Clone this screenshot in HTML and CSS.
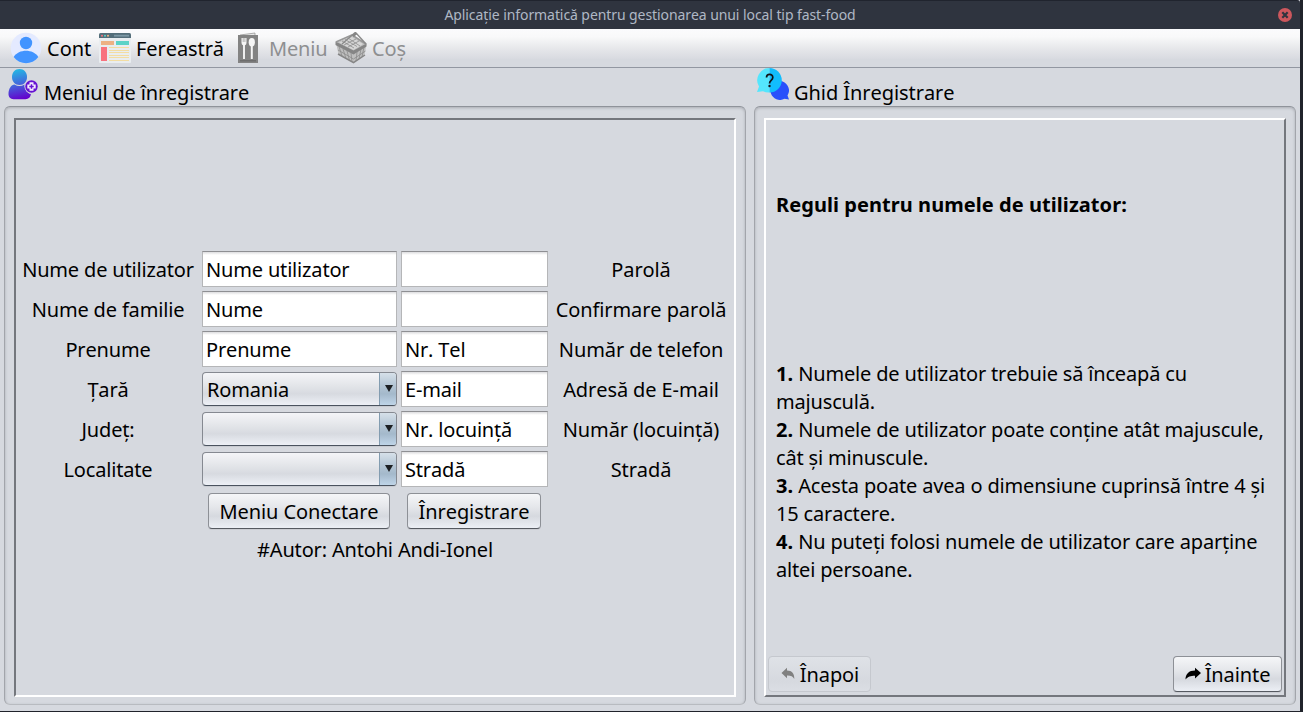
FILE: index.html
```html
<!DOCTYPE html>
<html lang="ro">
<head>
<meta charset="utf-8">
<title>Aplicație informatică pentru gestionarea unui local tip fast-food</title>
<link rel="stylesheet" href="styles.css">
</head>
<body>
<div class="window">
  <header class="titlebar">
    <span class="titlebar-text">Aplicație informatică pentru gestionarea unui local tip fast-food</span>
    <svg class="close" width="14" height="14" viewBox="0 0 14 14"><circle cx="7" cy="7" r="7" fill="#cc575d"/><path d="M4.300 4.300l5.400 5.400M9.700 4.300l-5.400 5.400" stroke="#2f343f" stroke-width="2.200"/></svg>
  </header>
  <nav class="menubar">
    <div class="menu menu-account">
      <svg width="32" height="32" viewBox="0 0 32 32"><circle cx="16" cy="16" r="15.300" fill="#e4eaff"/><circle cx="16" cy="11" r="6.200" fill="#4294ff"/><path d="M3.600 25C9 16.800 23 16.800 28.400 25C22 33.300 10 33.300 3.600 25Z" fill="#4294ff"/></svg>
      <span>Cont</span>
    </div>
    <div class="menu menu-window">
      <svg width="32" height="32" viewBox="0 0 32 32"><path d="M0 6h32v24q0 1-1 1H1q-1 0-1-1z" fill="#e9edf0"/><path d="M0 6V2.500Q0 1 1.500 1h29Q32 1 32 2.500V6z" fill="#546e7a"/><path d="M15 3.700h15" stroke="#7c98a5" stroke-width="1.800"/><circle cx="3" cy="3.700" r="1" fill="#f8727f"/><circle cx="6" cy="3.700" r="1" fill="#5bd3c7"/><circle cx="9" cy="3.700" r="1" fill="#f2b488"/><path d="M2 9h13v4H2z" fill="#edb184"/><path d="M17 9h13v4H17z" fill="#5bd3c7"/><path d="M2 15h6v14H2z" fill="#f8727f"/><path d="M10 15.500h20M10 18.500h20M10 20.500h20M10 23.500h20M10 25.500h20M10 28.500h20" stroke="#f3dda2"/></svg>
      <span>Fereastră</span>
    </div>
    <div class="menu menu-food disabled">
      <svg width="32" height="32" viewBox="0 0 32 32"><path d="M8 3l15-2v4" fill="#e8e8e8" stroke="#8c8c8c" stroke-width=".7"/><path d="M6 3h20v28H6z" fill="#838383"/><path d="M8 28h16v1.500H8z" fill="#6d6d6d"/><path d="M9.500 6h5v5q0 1.800-1.800 2.500h-1.400Q9.500 12.800 9.500 11z" fill="#f5f5f5"/><path d="M11.200 6v4M12.900 6v4" stroke="#838383" stroke-width=".6"/><path d="M12 13v14" stroke="#f5f5f5" stroke-width="1.900"/><ellipse cx="19.800" cy="10.200" rx="3.100" ry="4.200" fill="#f5f5f5"/><path d="M19.800 12v15" stroke="#f5f5f5" stroke-width="2"/></svg>
      <span>Meniu</span>
    </div>
    <div class="menu menu-cart disabled">
      <svg width="32" height="32" viewBox="0 0 32 32"><path d="M1 11l2.500 11L18.500 31L29.500 23L31.500 12L17 4z" fill="#bebebe"/><path d="M4 10.500L17 5l11 7l-9.500 6z" fill="#d6d6d6"/><g fill="none" stroke="#8b8b8b" stroke-width=".8"><path d="M7 9l12 7M10 7.500l12 7M13 6l12 8M9 13l12-6M13 15l11-6M3 18l15.500 9l12-8M4 14.500l3 9.500M8 17l3 9.500M12 19l2.500 9.500M16 21l1 9M22 20l-1 9M26 17l-2 10M29 15l-2 10"/></g><path d="M.500 9.500L18.500 18.500L31.500 11.500v3L18.500 22.500L.500 13z" fill="#858585"/><path d="M1 10L17 3l14 9" fill="none" stroke="#989898" stroke-width="1.800"/><path d="M3 22l15.500 8.700L30 23" fill="none" stroke="#858585" stroke-width="1.500"/><path d="M7 12L19 1.500q1.500-1.500 2.500 0L31 12" fill="none" stroke="#8a8a8a" stroke-width="1.300"/><path d="M17 3l3.500-3l1.800 2l-3.500 3z" fill="#858585"/></svg>
      <span>Coș</span>
    </div>
  </nav>
  <main class="content">
    <section class="group">
      <h1 class="group-title">
        <svg width="32" height="32" viewBox="0 0 32 32"><defs><linearGradient id="person" x1="8" y1="0" x2="15" y2="31" gradientUnits="userSpaceOnUse"><stop offset="0" stop-color="#20c0e4"/><stop offset=".5" stop-color="#4268dc"/><stop offset="1" stop-color="#6500cc"/></linearGradient></defs><g fill="url(#person)"><path d="M11.500 1C16 1 19 4.500 19 9s-3 8-7.500 8S4 13.500 4 9s3-8 7.500-8z"/><path d="M.500 26c0-5.500 3-9.500 6-9.500q5 3 10 0c0 5 3 9 6.300 9.500c0 3-2.300 5.200-5.300 5.200h-12c-3 0-5-2.200-5-5.200z"/></g><circle cx="23.500" cy="18.500" r="7" fill="#d6d9df"/><circle cx="23.500" cy="18.500" r="6.200" fill="#6611d2"/><path d="M23.500 14.300v8.400M19.300 18.500h8.400" stroke="#f5edff" stroke-width="4"/><path d="M23.500 16.300v4.400M21.300 18.500h4.400" stroke="#6611d2" stroke-width="1.500"/></svg>
        <span>Meniul de înregistrare</span>
      </h1>
      <div class="frame"><div class="panel sunken">
        <form class="fields">
          <label>Nume de utilizator</label><div class="field">Nume utilizator</div><div class="field"></div><label>Parolă</label>
          <label>Nume de familie</label><div class="field">Nume</div><div class="field"></div><label>Confirmare parolă</label>
          <label>Prenume</label><div class="field">Prenume</div><div class="field">Nr. Tel</div><label>Număr de telefon</label>
          <label>Țară</label><div class="combo"><span>Romania</span><i class="arrow"></i></div><div class="field">E-mail</div><label>Adresă de E-mail</label>
          <label>Județ:</label><div class="combo"><span></span><i class="arrow"></i></div><div class="field">Nr. locuință</div><label>Număr (locuință)</label>
          <label>Localitate</label><div class="combo"><span></span><i class="arrow"></i></div><div class="field">Stradă</div><label>Stradă</label>
        </form>
        <div class="actions">
          <button class="button login" type="button">Meniu Conectare</button>
          <button class="button register" type="button">Înregistrare</button>
        </div>
        <p class="author">#Autor: Antohi Andi-Ionel</p>
      </div></div>
    </section>
    <section class="group">
      <h1 class="group-title">
        <svg width="32" height="32" viewBox="0 0 32 32"><path d="M22 13a9.500 9.500 0 0 1 8.500 14.500L32 31.500l-4.500-.7A9.500 9.500 0 1 1 22 13z" fill="#2950fb"/><path d="M12.500 0A12.200 12.200 0 0 0 2 18.500L0 24l6-.8A12.200 12.200 0 0 0 12.500 24.500z" fill="#54e6fd"/><path d="M12.500 0a12.250 12.250 0 0 1 0 24.500z" fill="#12bdfd"/><path d="M9.500 9.500c0-4.300 6.300-4.300 6.300 0c0 3-3.300 2.800-3.300 6" fill="none" stroke="#121316" stroke-width="1.700"/><circle cx="12.500" cy="18" r="1.200" fill="#121316"/></svg>
        <span>Ghid Înregistrare</span>
      </h1>
      <div class="frame"><div class="panel raised">
        <h2 class="rules-title">Reguli pentru numele de utilizator:</h2>
        <div class="rules">
          <p><b>1.</b> Numele de utilizator trebuie să înceapă cu<br>majusculă.</p>
          <p><b>2.</b> Numele de utilizator poate conține atât majuscule,<br>cât și minuscule.</p>
          <p><b>3.</b> Acesta poate avea o dimensiune cuprinsă între 4 și<br>15 caractere.</p>
          <p><b>4.</b> Nu puteți folosi numele de utilizator care aparține<br>altei persoane.</p>
        </div>
        <div class="pager">
          <button class="button back" type="button"><svg width="16" height="16" viewBox="0 0 16 16"><path d="M1.500 7L7 1.700v2.900c5 0 7.500 3.500 7.300 8.400c-1.300-2.700-3.500-3.700-7.300-3.600v2.900z" fill="#808080"/></svg>Înapoi</button>
          <button class="button next" type="button"><svg width="16" height="16" viewBox="0 0 16 16"><path d="M16 7L10 1.700v2.700C4 4.400.500 7.700.500 13.500C3 10.500 5.500 9.700 10 9.700v2.900z" fill="#000"/></svg>Înainte</button>
        </div>
      </div></div>
    </section>
  </main>
</div>
</body>
</html>
```

FILE: styles.css
```css
* { box-sizing: border-box; }
body {
  margin: 0;
  height: 712px;
  overflow: hidden;
  background: #20232b;
  color: #000;
  font: 20px/28px "Noto Sans", sans-serif;
  font-kerning: none;
  letter-spacing: -.17px;
}
h1, h2, p { margin: 0; font-size: 20px; }
b { letter-spacing: .06px; }
svg { flex: none; display: block; }
.window {
  width: 1300px;
  height: 711px;
  display: flex;
  flex-direction: column;
  background: #d6d9df;
}
.titlebar {
  height: 29px;
  flex: none;
  display: grid;
  grid-template-columns: 1fr auto 1fr;
  align-items: center;
  padding-right: 8px;
  padding-left: 8px;
  background: #2f343f;
  border-top: 1px solid #20242e;
  border-radius: 0 3px 0 0;
}
.titlebar-text {
  grid-column: 2;
  font-size: 14px;
  line-height: 26px;
  letter-spacing: -.08px;
  color: #afb8c5;
  white-space: nowrap;
}
.close { justify-self: end; }
.menubar {
  height: 39px;
  flex: none;
  display: flex;
  padding: 3px 0 0 10px;
  background: linear-gradient(#fbfbfd 0, #f9f9fa 20%, #e7e8eb 50%, #d9dbe1 77%, #d6d9df 80%);
  border-bottom: 1px solid #9297a1;
}
.menu { display: flex; align-items: center; height: 32px; white-space: nowrap; gap: 5px; }
.menu span { padding-top: 2px; }
.menu-account { width: 89px; letter-spacing: 0; }
.menu-window { width: 133px; letter-spacing: -.08px; }
.menu-food { width: 103px; }
.disabled { color: #8e8f91; }
.content { flex: 1; display: grid; grid-template-columns: 750px 550px; min-height: 0; }
.group { display: flex; flex-direction: column; padding: 0 4px 6px; min-width: 0; }
.group-title {
  height: 38px;
  flex: none;
  display: flex;
  gap: 4px;
  padding-left: 4px;
  font-weight: 400;
  line-height: 50px;
  white-space: nowrap;
}
.group:last-child .group-title { padding-left: 3px; gap: 5px; letter-spacing: -.06px; }
.frame {
  flex: 1;
  padding: 11px 9px 7px;
  border: 1px solid #a2a5ab;
  border-top: 1px solid #8f939a;
  border-bottom-color: #b8bbc0;
  border-radius: 6px;
  box-shadow: inset 0 1px 3px #a9acb2;
}
.panel { height: 579px; display: flex; flex-direction: column; background: #d6d9df; }
.sunken { border: 2px solid; border-color: #74777d #fff #fff #74777d; }
.raised { border: 2px solid; border-color: #fff #74777d #74777d #fff; padding: 0 2px; }
.fields {
  display: grid;
  grid-template-columns: 184px 195px 147px 183px;
  grid-template-rows: repeat(6, 36px);
  gap: 4px 2px;
  margin-top: 131px;
  text-align: center;
}
.fields label { line-height: 37px; white-space: nowrap; }
.field, .combo { text-align: left; white-space: nowrap; }
.fields > :nth-child(4n+3) { margin-left: 2px; margin-right: -2px; }
.fields > :nth-child(4n) { padding-left: 3px; letter-spacing: -.1px; }
.field {
  padding-left: 3px;
  line-height: 35px;
  background: linear-gradient(#dddddf, #fff 3px);
  border: 1px solid #b5b6b8;
  border-top-color: #8e8f93;
}
.combo {
  display: flex;
  height: 34px;
  margin-top: 1px;
  padding-left: 4px;
  line-height: 33px;
  overflow: hidden;
  border: 1px solid #858991;
  border-bottom-color: #4a535f;
  border-radius: 4px;
  background: linear-gradient(#f4f5f8, #e3e5e9 40%, #d7dae0 65%, #edf0f6);
  box-shadow: 0 1px #c8cbd1;
}
.combo span { flex: 1; }
.arrow {
  width: 17px;
  border-left: 1px solid #829cb0;
  background: linear-gradient(#d6e0e9, #b3c5d4 40%, #a4b9cb 65%, #bfd5e8);
}
.arrow::before {
  content: "";
  display: block;
  margin: 12px 0 0 5px;
  width: 0;
  border: solid transparent;
  border-width: 7px 4px 0;
  border-top-color: #1d2023;
}
.actions { display: flex; gap: 17px; margin: 6px 0 0 192px; }
.button {
  height: 36px;
  flex: none;
  display: flex;
  align-items: center;
  justify-content: center;
  padding: 2px 0 0;
  font: inherit;
  font-kerning: none;
  letter-spacing: -.1px;
  color: #000;
  border: 1px solid #8d9096;
  border-bottom-color: #555960;
  border-radius: 4px;
  background: linear-gradient(#f5f6f8, #e4e6ea 40%, #d6d9df 65%, #eceff5);
  box-shadow: 0 1px #caccd2;
}
.login { width: 182px; }
.register { width: 134px; }
.author { margin-top: 7px; text-align: center; }
.rules-title { margin: 71px 8px 0; font-weight: 700; letter-spacing: .06px; }
.rules { margin: 141px 8px 0; white-space: nowrap; }
.pager { display: flex; justify-content: space-between; margin-top: 72px; }
.button svg { margin-top: -2px; }
.back {
  width: 103px;
  gap: 4px;
  border-color: #c5c8ce;
  background: linear-gradient(#dfe2e7, #d6d9df 70%, #dbdee4);
  box-shadow: none;
}
.next { width: 109px; gap: 4px; }
```
